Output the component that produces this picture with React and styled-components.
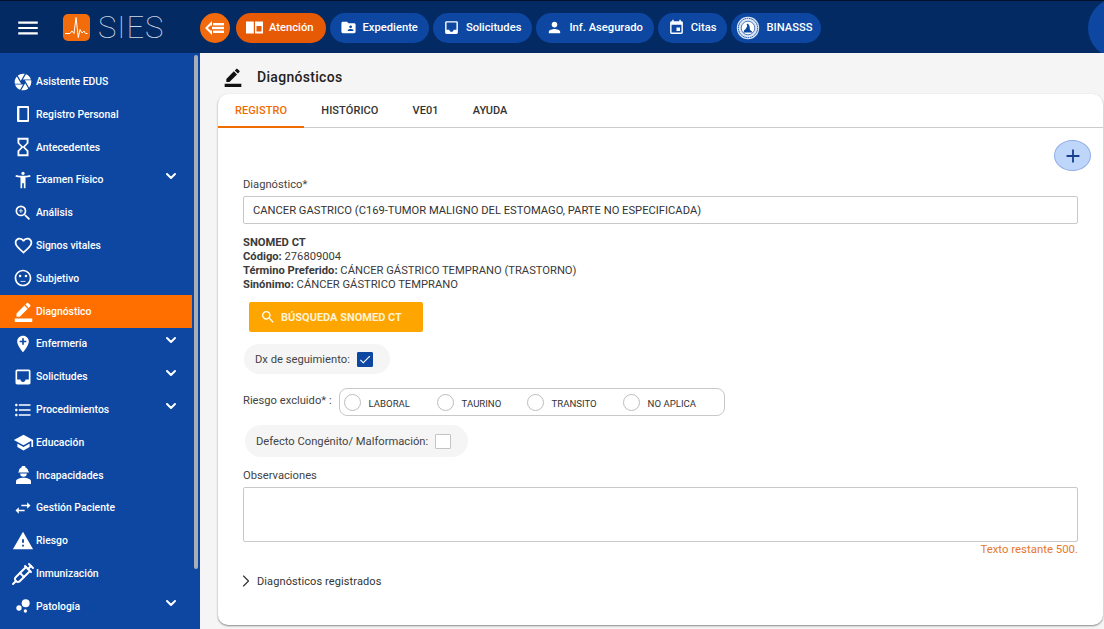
import React from 'react';
import styled, { createGlobalStyle } from 'styled-components';
import {
  MdCamera, MdHourglassEmpty, MdAccessibilityNew, MdZoomIn, MdFavoriteBorder,
  MdSentimentNeutral, MdBorderColor, MdAddLocation, MdInbox, MdFormatListBulleted, MdSchool,
  MdSwapHoriz, MdWarning, MdBubbleChart, MdMenu,
  MdFolderShared, MdPerson, MdEvent, MdSearch, MdAdd, MdCheck,
} from 'react-icons/md';
import { ChevronDown, ChevronRight, Syringe } from 'lucide-react';

const GlobalStyle = createGlobalStyle`
  html, body { margin: 0; height: 100%; overflow: hidden; }
  body { font-family: Roboto, "Liberation Sans", sans-serif; color: #333; background: #f5f5f5; }
  * { box-sizing: border-box; }
`;

const Page = styled.div`
  display: flex;
  flex-direction: column;
  width: 1104px;
  height: 629px;
`;

const Header = styled.header`
  display: flex;
  align-items: center;
  flex: 0 0 53px;
  padding-top: 1px;
  background: #042a63;
  border-top: 1px solid #02102b;
  overflow: hidden;
`;

const MenuButton = styled.div`
  display: flex;
  margin: 0 22px 0 15px;
  color: #fff;
  font-size: 26px;
`;

const Logo = styled.div`
  display: flex;
  align-items: center;
  gap: 8px;
  width: 137px;
  color: #cdd6e4;
  font-size: 31px;
  font-weight: 100;
  letter-spacing: 1px;
`;

const LogoMark = styled.svg`
  width: 27px;
  height: 27px;
`;

const BackButton = styled.div`
  display: flex;
  align-items: center;
  justify-content: center;
  width: 30px;
  height: 30px;
  margin-right: 6px;
  border-radius: 50%;
  background: #f16a0d;
`;

const Pills = styled.nav`
  display: flex;
  gap: 4px;
`;

const Pill = styled.div`
  display: flex;
  align-items: center;
  gap: 6px;
  height: 30px;
  padding: 0 ${(p) => p.$right || 11}px 0 ${(p) => p.$left || 10}px;
  border-radius: 15px;
  background: ${(p) => (p.$active ? '#e65a06' : '#0d47a1')};
  color: #fff;
  font-size: 11.2px;
  font-weight: 500;
  white-space: nowrap;
  svg { flex: none; font-size: 17px; }
`;

const UserCircle = styled.div`
  flex: none;
  width: 60px;
  height: 60px;
  margin-left: auto;
  margin-right: -44px;
  border-radius: 50%;
  background: #0d47a1;
`;

const Body = styled.div`
  display: flex;
  flex: 1;
  min-height: 0;
`;

const Sidebar = styled.aside`
  display: flex;
  flex: 0 0 200px;
  background: #0d47a1;
`;

const SideList = styled.ul`
  flex: 0 0 192px;
  margin: 0;
  padding: 12.2px 0 0;
  list-style: none;
`;

const SideItem = styled.li`
  display: flex;
  align-items: center;
  height: 32.8px;
  padding: 0 13px 0 13px;
  background: ${(p) => (p.$active ? '#ff6f00' : 'transparent')};
  color: #fff;
  font-size: 10.4px;
  font-weight: 500;
`;

const SideIcon = styled.span`
  display: flex;
  justify-content: center;
  flex: 0 0 20px;
  min-width: 0;
  width: 20px;
  margin-right: 3px;
  font-size: ${(p) => p.$size || 20}px;
  svg { flex: none; }
`;

const Caret = styled(ChevronDown)`
  width: 16px;
  height: 16px;
  margin-left: auto;
  margin-top: -7px;
  stroke-width: 3;
`;

const ScrollTrack = styled.div`
  flex: 1;
  padding: 2px 2px 0 2px;
`;

const ScrollThumb = styled.div`
  width: 4px;
  height: 514px;
  border-radius: 2px;
  background: #a7aeb8;
`;

const Main = styled.main`
  flex: 1;
  min-width: 0;
  padding: 0 1px 0 18px;
`;

const PageTitle = styled.h1`
  display: flex;
  align-items: center;
  height: 41px;
  margin: 0;
  padding: 6px 0 0 5px;
  color: #222;
  font-size: 14px;
  font-weight: 500;
  letter-spacing: 0.3px;
  svg { font-size: 20px; margin-right: 14px; color: #111; }
`;

const Card = styled.section`
  height: 531px;
  border-radius: 10px;
  background: #fff;
  box-shadow: 0 1px 2px rgba(0, 0, 0, 0.45);
`;

const Tabs = styled.div`
  display: flex;
  height: 34px;
  border-bottom: 1px solid #ccc;
`;

const Tab = styled.div`
  display: flex;
  align-items: center;
  padding: 0 17px ${(p) => (p.$active ? 0 : 2)}px;
  margin-bottom: -1px;
  border-bottom: ${(p) => (p.$active ? '2px solid #ef6c00' : '0')};
  color: ${(p) => (p.$active ? '#ef6c00' : '#333')};
  font-size: 11px;
  font-weight: 500;
  letter-spacing: 0.08px;
`;

const Content = styled.div`
  display: flex;
  flex-direction: column;
  align-items: flex-start;
  padding: 12px 25px 0;
`;

const AddRow = styled.div`
  display: flex;
  justify-content: flex-end;
  align-self: stretch;
  margin-right: -13px;
`;

const AddButton = styled.div`
  display: flex;
  align-items: center;
  justify-content: center;
  width: 37px;
  height: 31px;
  border: 1px solid #8fade6;
  border-radius: 50%;
  background: #bfd6fb;
  color: #173f8f;
  font-size: 22px;
`;

const Label = styled.label`
  margin-top: ${(p) => p.$top || 0}px;
  color: #444;
  font-size: 11.2px;
  line-height: 13px;
`;

const TextInput = styled.div`
  align-self: stretch;
  height: 28px;
  margin-top: 5px;
  padding-left: 9px;
  border: 1px solid #c8c8c8;
  border-radius: 2px;
  color: #333;
  font-size: 11.2px;
  line-height: 27px;
`;

const Snomed = styled.div`
  margin-top: 12px;
  color: #3a3a3a;
  font-size: 11.2px;
  line-height: 14px;
  b { font-weight: 700; }
`;

const SearchButton = styled.div`
  display: flex;
  align-items: center;
  gap: 5px;
  width: 174px;
  height: 30px;
  margin: 10px 0 0 6px;
  padding-left: 11px;
  border-radius: 2px;
  background: #ffa500;
  color: #fff3d6;
  font-size: 11px;
  font-weight: 700;
  svg { font-size: 16px; color: #fff; }
`;

const CheckPill = styled.div`
  display: flex;
  align-items: center;
  gap: 7px;
  height: ${(p) => p.$height}px;
  margin: ${(p) => p.$top}px 0 0 ${(p) => p.$left}px;
  padding: 0 17px 0 11px;
  border-radius: 16px;
  background: #f5f5f5;
  color: #444;
  font-size: 11.2px;
`;

const CheckBox = styled.span`
  display: flex;
  align-items: center;
  justify-content: center;
  width: 16px;
  height: 15px;
  border: 1px solid ${(p) => (p.$checked ? '#0d47a1' : '#c4c4c4')};
  border-radius: 1px;
  background: ${(p) => (p.$checked ? '#0d47a1' : '#fff')};
  color: #fff;
  font-size: 15px;
`;

const RiskRow = styled.div`
  display: flex;
  align-items: center;
  margin-top: 14px;
  color: #444;
  font-size: 11.2px;
`;

const RiskLabel = styled.span`
  margin-bottom: 4px;
`;

const RadioGroup = styled.div`
  display: flex;
  align-items: center;
  width: 386px;
  height: 28px;
  margin-left: 7px;
  padding-left: 4px;
  border: 1px solid #c8c8c8;
  border-radius: 8px;
`;

const RadioItem = styled.div`
  display: flex;
  align-items: center;
  width: ${(p) => p.$width}px;
  color: #333;
  font-size: 9.6px;
  span { margin-top: 2px; }
`;

const RadioDot = styled.i`
  flex: none;
  width: 17px;
  height: 17px;
  margin-right: 8px;
  border: 1px solid #bdbdbd;
  border-radius: 50%;
`;

const TextArea = styled.div`
  align-self: stretch;
  height: 55px;
  margin-top: 5px;
  border: 1px solid #c8c8c8;
  border-radius: 2px;
`;

const Remaining = styled.div`
  align-self: flex-end;
  margin-top: 1px;
  color: #e8772e;
  font-size: 11.4px;
  line-height: 13px;
`;

const Expander = styled.div`
  display: flex;
  align-items: center;
  gap: 1px;
  margin-top: 15px;
  color: #333;
  font-size: 11px;
  letter-spacing: 0.1px;
`;

const ExpanderArrow = styled(ChevronRight)`
  width: 20px;
  height: 20px;
  margin-left: -7px;
  stroke-width: 1.4;
`;

function SiesMark() {
  return (
    <LogoMark viewBox="0 0 27 27">
      <rect width="27" height="27" rx="5" fill="#f26c0c" />
      <path d="M2 19.500h5l2-2.500 2 2.500 2-16 2.300 20 1.700-8 2 3.500 2-2 1.500 2.500h2" fill="none" stroke="#fff" strokeWidth="1" />
    </LogoMark>
  );
}

function BackIcon() {
  return (
    <svg width="22" height="16" viewBox="0 0 22 16" fill="#fff">
      <path d="M1 8l7-7v4.500H6.500L3.800 8l2.700 2.500H8V15z" />
      <rect x="9" y="3" width="11" height="2.400" />
      <rect x="8" y="6.800" width="12" height="2.400" />
      <rect x="9" y="10.600" width="11" height="2.400" />
    </svg>
  );
}

function ReaderIcon() {
  return (
    <svg width="17" height="17" viewBox="0 0 17 17" fill="#fff">
      <path fillRule="evenodd" d="M0 2.500h7.800v12H0zM9 2.500h8v12H9zM10.500 7v5.500h5V7z" />
    </svg>
  );
}

function PortraitIcon() {
  return (
    <svg width="12" height="16" viewBox="0 0 12 16" fill="#fff">
      <path fillRule="evenodd" d="M1 0h10a1 1 0 0 1 1 1v14a1 1 0 0 1-1 1H1a1 1 0 0 1-1-1V1a1 1 0 0 1 1-1zM2.400 2v12h8V2z" />
    </svg>
  );
}

function WorkerIcon() {
  return (
    <svg width="17" height="20" viewBox="0 0 17 20" fill="#fff">
      <path d="M3.800 6.500a4.700 4.700 0 0 1 3-4.300V1h3.400v1.200a4.700 4.700 0 0 1 3 4.300h.8v1H3z" />
      <path d="M5.200 8.500h6.600a3.300 3.300 0 0 1-6.600 0z" />
      <path d="M1 19v-2.500C1 14 5 12.800 8.500 12.800S16 14 16 16.500V19z" />
    </svg>
  );
}

function BinasssLogo() {
  return (
    <svg width="24" height="24" viewBox="0 0 24 24" fill="none">
      <circle cx="12" cy="12" r="11.200" fill="#dbe6f5" />
      <circle cx="12" cy="12" r="9.600" stroke="#0d47a1" strokeWidth="1" strokeDasharray="1.500 0.800" />
      <circle cx="12" cy="12" r="6.800" fill="#fff" stroke="#0d47a1" strokeWidth="0.700" />
      <path d="M7.500 16.500h9l-1-1.500-1.500-1-.5-4-1.500-2.500-1.500 1 .8 1.500-1.600 3-1.500 1.200z" fill="#0d47a1" />
    </svg>
  );
}

const sideItems = [
  { label: 'Asistente EDUS', Icon: MdCamera },
  { label: 'Registro Personal', Icon: PortraitIcon },
  { label: 'Antecedentes', Icon: MdHourglassEmpty, size: 22 },
  { label: 'Examen Físico', Icon: MdAccessibilityNew, caret: true },
  { label: 'Análisis', Icon: MdZoomIn },
  { label: 'Signos vitales', Icon: MdFavoriteBorder, size: 21 },
  { label: 'Subjetivo', Icon: MdSentimentNeutral },
  { label: 'Diagnóstico', Icon: MdBorderColor, active: true, size: 21 },
  { label: 'Enfermería', Icon: MdAddLocation, caret: true },
  { label: 'Solicitudes', Icon: MdInbox, caret: true },
  { label: 'Procedimientos', Icon: MdFormatListBulleted, caret: true },
  { label: 'Educación', Icon: MdSchool, size: 21 },
  { label: 'Incapacidades', Icon: WorkerIcon },
  { label: 'Gestión Paciente', Icon: MdSwapHoriz },
  { label: 'Riesgo', Icon: MdWarning, size: 22 },
  { label: 'Inmunización', Icon: Syringe, size: 17 },
  { label: 'Patología', Icon: MdBubbleChart, caret: true },
];

const radios = [
  { label: 'LABORAL', width: 93 },
  { label: 'TAURINO', width: 90 },
  { label: 'TRANSITO', width: 96 },
  { label: 'NO APLICA', width: 90 },
];

export default function App() {
  return (
    <Page>
      <GlobalStyle />
      <Header>
        <MenuButton><MdMenu /></MenuButton>
        <Logo><SiesMark />SIES</Logo>
        <BackButton><BackIcon /></BackButton>
        <Pills>
          <Pill $active $right={12}><ReaderIcon />Atención</Pill>
          <Pill><MdFolderShared />Expediente</Pill>
          <Pill><MdInbox />Solicitudes</Pill>
          <Pill><MdPerson />Inf. Asegurado</Pill>
          <Pill><MdEvent />Citas</Pill>
          <Pill $left={5} $right={8}><BinasssLogo />BINASSS</Pill>
        </Pills>
        <UserCircle />
      </Header>
      <Body>
        <Sidebar>
          <SideList>
            {sideItems.map(({ label, Icon, size, caret, active }) => (
              <SideItem key={label} $active={active}>
                <SideIcon $size={size}><Icon /></SideIcon>
                {label}
                {caret && <Caret />}
              </SideItem>
            ))}
          </SideList>
          <ScrollTrack><ScrollThumb /></ScrollTrack>
        </Sidebar>
        <Main>
          <PageTitle><MdBorderColor />Diagnósticos</PageTitle>
          <Card>
            <Tabs>
              <Tab $active>REGISTRO</Tab>
              <Tab>HISTÓRICO</Tab>
              <Tab>VE01</Tab>
              <Tab>AYUDA</Tab>
            </Tabs>
            <Content>
              <AddRow><AddButton><MdAdd /></AddButton></AddRow>
              <Label $top={7}>Diagnóstico*</Label>
              <TextInput>CANCER GASTRICO (C169-TUMOR MALIGNO DEL ESTOMAGO, PARTE NO ESPECIFICADA)</TextInput>
              <Snomed>
                <b>SNOMED CT</b><br />
                <b>Código:</b> 276809004<br />
                <b>Término Preferido:</b> CÁNCER GÁSTRICO TEMPRANO (TRASTORNO)<br />
                <b>Sinónimo:</b> CÁNCER GÁSTRICO TEMPRANO
              </Snomed>
              <SearchButton><MdSearch />BÚSQUEDA SNOMED CT</SearchButton>
              <CheckPill $height={30} $top={12} $left={1}>
                Dx de seguimiento:
                <CheckBox $checked><MdCheck /></CheckBox>
              </CheckPill>
              <RiskRow>
                <RiskLabel>Riesgo excluido* :</RiskLabel>
                <RadioGroup>
                  {radios.map((r) => (
                    <RadioItem key={r.label} $width={r.width}>
                      <RadioDot /><span>{r.label}</span>
                    </RadioItem>
                  ))}
                </RadioGroup>
              </RiskRow>
              <CheckPill $height={32} $top={9} $left={2}>
                Defecto Congénito/ Malformación:
                <CheckBox />
              </CheckPill>
              <Label $top={12}>Observaciones</Label>
              <TextArea />
              <Remaining>Texto restante 500.</Remaining>
              <Expander><ExpanderArrow />Diagnósticos registrados</Expander>
            </Content>
          </Card>
        </Main>
      </Body>
    </Page>
  );
}
